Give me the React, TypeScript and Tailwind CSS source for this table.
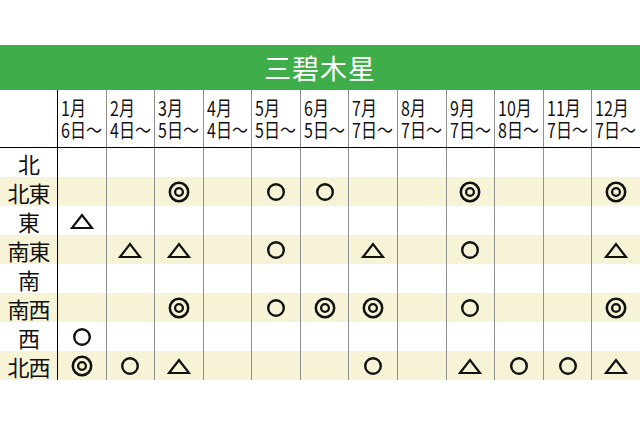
import React from "react";

type Mark = "" | "d" | "o" | "t";

const headers: [string, string][] = [
  ["1月", "6日～"],
  ["2月", "4日～"],
  ["3月", "5日～"],
  ["4月", "4日～"],
  ["5月", "5日～"],
  ["6月", "5日～"],
  ["7月", "7日～"],
  ["8月", "7日～"],
  ["9月", "7日～"],
  ["10月", "8日～"],
  ["11月", "7日～"],
  ["12月", "7日～"],
];

const rows: { label: string; marks: Mark[] }[] = [
  { label: "北", marks: ["", "", "", "", "", "", "", "", "", "", "", ""] },
  { label: "北東", marks: ["", "", "d", "", "o", "o", "", "", "d", "", "", "d"] },
  { label: "東", marks: ["t", "", "", "", "", "", "", "", "", "", "", ""] },
  { label: "南東", marks: ["", "t", "t", "", "o", "", "t", "", "o", "", "", "t"] },
  { label: "南", marks: ["", "", "", "", "", "", "", "", "", "", "", ""] },
  { label: "南西", marks: ["", "", "d", "", "o", "d", "d", "", "o", "", "", "d"] },
  { label: "西", marks: ["o", "", "", "", "", "", "", "", "", "", "", ""] },
  { label: "北西", marks: ["d", "o", "t", "", "", "", "o", "", "t", "o", "o", "t"] },
];

function Symbol({ m }: { m: Mark }) {
  if (m === "d")
    return (
      <svg width="22" height="22" viewBox="0 0 22 22">
        <circle cx="11" cy="11" r="9.2" fill="none" stroke="#111" strokeWidth="2.5" />
        <circle cx="11" cy="11" r="3.9" fill="none" stroke="#111" strokeWidth="2.3" />
      </svg>
    );
  if (m === "o")
    return (
      <svg width="20" height="20" viewBox="0 0 20 20">
        <circle cx="10" cy="10" r="7.8" fill="none" stroke="#111" strokeWidth="2.4" />
      </svg>
    );
  if (m === "t")
    return (
      <svg width="24" height="17" viewBox="0 0 24 17" className="mt-[1px]">
        <polygon points="2,15 12,2 22,15" fill="none" stroke="#111" strokeWidth="2.2" strokeLinejoin="miter" />
      </svg>
    );
  return null;
}

const font = { fontFamily: '"Noto Sans CJK JP", "Noto Sans", sans-serif' };

export default function App() {
  return (
    <div className="w-[640px] h-[426px] bg-white overflow-hidden text-[#111]" style={font}>
      <div className="h-[45px]" />
      <div className="h-[45px] bg-[#3fae4a] flex items-center justify-center">
        <span className="text-white text-[27px] leading-none tracking-[1px]">三碧木星</span>
      </div>
      <div className="grid grid-cols-[57px_repeat(12,1fr)] h-[58px] border-b-[1.5px] border-black">
        <div className="bg-white" />
        {headers.map(([a, b], i) => (
          <div
            key={i}
            className={`overflow-hidden pl-[3px] pt-[7px] ${
              i === 0 ? "border-l-[1.5px] border-black" : "border-l border-[#8f8f8f]"
            }`}
          >
            <div className="origin-top-left scale-x-[0.8] text-[20px] leading-[22px] whitespace-nowrap">
              <div>{a}</div>
              <div>{b}</div>
            </div>
          </div>
        ))}
      </div>
      {rows.map((r, ri) => (
        <div
          key={ri}
          className={`grid grid-cols-[57px_repeat(12,1fr)] h-[29px] ${ri % 2 === 1 ? "bg-[#f6f3d7]" : "bg-white"}`}
        >
          <div className="flex items-center justify-center text-[22px] leading-none tracking-[-1px]">
            {r.label}
          </div>
          {r.marks.map((m, ci) => (
            <div
              key={ci}
              className={`flex items-center justify-center ${
                ci === 0 ? "border-l-[1.5px] border-black" : "border-l border-[#8f8f8f]"
              }`}
            >
              <Symbol m={m} />
            </div>
          ))}
        </div>
      ))}
    </div>
  );
}
